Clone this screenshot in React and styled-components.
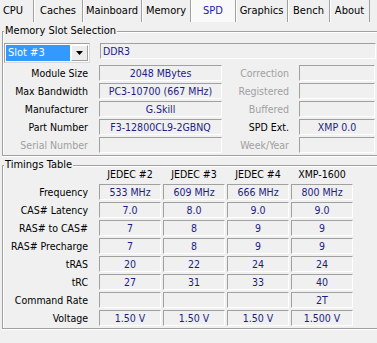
import React from "react";
import styled, { createGlobalStyle } from "styled-components";

const GlobalStyle = createGlobalStyle`
  html, body {
    margin: 0;
    padding: 0;
    background: #f0f0f0;
    overflow: hidden;
  }
  body {
    font-family: "DejaVu Sans Condensed", "DejaVu Sans", "Liberation Sans", sans-serif;
    font-stretch: condensed;
    font-size: 10.5px;
    color: #000;
  }
`;

const tabs = [
  { name: "CPU", width: 41 },
  { name: "Caches", width: 49 },
  { name: "Mainboard", width: 59 },
  { name: "Memory", width: 49 },
  { name: "SPD", width: 45, active: true },
  { name: "Graphics", width: 52 },
  { name: "Bench", width: 42 },
  { name: "About", width: 40 },
];

const info = [
  ["Module Size", "2048 MBytes", "Correction", "", false],
  ["Max Bandwidth", "PC3-10700 (667 MHz)", "Registered", "", false],
  ["Manufacturer", "G.Skill", "Buffered", "", false],
  ["Part Number", "F3-12800CL9-2GBNQ", "SPD Ext.", "XMP 0.0", true],
  ["Serial Number", "", "Week/Year", "", false],
];

const columns = ["JEDEC #2", "JEDEC #3", "JEDEC #4", "XMP-1600"];

const timings = [
  ["Frequency", ["533 MHz", "609 MHz", "666 MHz", "800 MHz"]],
  ["CAS# Latency", ["7.0", "8.0", "9.0", "9.0"]],
  ["RAS# to CAS#", ["7", "8", "9", "9"]],
  ["RAS# Precharge", ["7", "8", "9", "9"]],
  ["tRAS", ["20", "22", "24", "24"]],
  ["tRC", ["27", "31", "33", "40"]],
  ["Command Rate", ["", "", "", "2T"]],
  ["Voltage", ["1.50 V", "1.50 V", "1.50 V", "1.500 V"]],
];

const App = () => {
  return (
    <Window>
      <GlobalStyle />
      <TabStrip>
        {tabs.map((t) => (
          <Tab key={t.name} $width={t.width} $active={t.active}>
            {t.name}
          </Tab>
        ))}
      </TabStrip>

      <Group>
        <Legend>Memory Slot Selection</Legend>
        <SlotRow>
          <Combo>
            <ComboValue>Slot #3</ComboValue>
            <ComboButton>
              <svg width="7" height="4" viewBox="0 0 7 4">
                <path d="M0 0h7L3.5 4z" fill="#000" />
              </svg>
            </ComboButton>
          </Combo>
          <Field $align="left" $width={276}>DDR3</Field>
        </SlotRow>
        <InfoGrid>
          {info.map(([label, value, label2, value2, enabled2], i) => (
            <React.Fragment key={label}>
              <Label $disabled={i === 4}>{label}</Label>
              <Field>{value}</Field>
              <Label $disabled={!enabled2} $pad={10}>{label2}</Label>
              <Field>{value2}</Field>
            </React.Fragment>
          ))}
        </InfoGrid>
      </Group>

      <Group>
        <Legend>Timings Table</Legend>
        <TimingGrid>
          <span />
          {columns.map((c) => (
            <ColumnHead key={c}>{c}</ColumnHead>
          ))}
          {timings.map(([label, values]) => (
            <React.Fragment key={label}>
              <Label $pad={9}>{label}</Label>
              {values.map((v, i) => (
                <Field key={i}>{v}</Field>
              ))}
            </React.Fragment>
          ))}
        </TimingGrid>
      </Group>
    </Window>
  );
};

export default App;

const Window = styled.div`
  width: 392px;
  height: 343px;
  overflow: hidden;
`;

const TabStrip = styled.div`
  display: flex;
  height: 22px;
  margin-left: -7px;
`;

const Tab = styled.div`
  width: ${(p) => p.$width}px;
  height: 22px;
  box-sizing: border-box;
  display: flex;
  align-items: center;
  justify-content: center;
  padding-bottom: 1px;
  font-size: 11px;
  color: ${(p) => (p.$active ? "#1a1ab4" : "#000")};
  background: ${(p) => (p.$active ? "#f9f9f9" : "transparent")};
  border-right: 1px solid #a0a0a0;
  box-shadow: inset 1px 0 0 #fff;
  white-space: nowrap;
`;

const Group = styled.section`
  position: relative;
  margin: 9px 0 0 2px;
  width: 384px;
  box-sizing: border-box;
  border: 1px solid #a0a0a0;
  box-shadow: inset 1px 1px 0 #fff, 0 1px 0 #fff;
  padding: 1px 0 2px 0;
`;

const Legend = styled.span`
  position: absolute;
  top: -8px;
  left: 1px;
  padding: 0 1px;
  line-height: 14px;
  font-size: 11px;
  background: #f0f0f0;
  white-space: nowrap;
`;

const SlotRow = styled.div`
  display: flex;
  gap: 10px;
  margin: 10px 0 0 1px;
`;

const Combo = styled.div`
  width: 86px;
  height: 20px;
  box-sizing: border-box;
  display: flex;
  padding: 1px;
  background: #fff;
  border: 1px solid #a0a0a0;
  border-right-color: #d8d8d8;
  border-bottom-color: #d8d8d8;
`;

const ComboValue = styled.div`
  flex: 1;
  background: #3399ff;
  color: #fff;
  font-size: 11px;
  line-height: 16px;
  padding-left: 2px;
`;

const ComboButton = styled.div`
  width: 17px;
  margin-left: 1px;
  box-sizing: border-box;
  display: flex;
  align-items: center;
  justify-content: center;
  background: #ececec;
  border: 1px solid #fff;
  border-right-color: #a0a0a0;
  border-bottom-color: #a0a0a0;
`;

const InfoGrid = styled.div`
  display: grid;
  grid-template-columns: 96px 123px 77px 76px;
  grid-auto-rows: 16px;
  row-gap: 2px;
  margin-top: 2px;
`;

const Label = styled.div`
  text-align: right;
  padding-right: ${(p) => p.$pad ?? 11}px;
  line-height: 16px;
  white-space: nowrap;
  color: ${(p) => (p.$disabled ? "#a0a0a0" : "#000")};
`;

const Field = styled.div`
  ${(p) => (p.$width ? `width: ${p.$width}px;` : "")}
  height: 16px;
  box-sizing: border-box;
  border-top: 1px solid #a0a0a0;
  border-left: 1px solid #a0a0a0;
  border-bottom: 1px solid #fff;
  border-right: 1px solid #fff;
  color: #1c1c84;
  line-height: 14px;
  text-align: ${(p) => p.$align ?? "center"};
  padding: 0 2px;
  white-space: nowrap;
  overflow: hidden;
`;

const TimingGrid = styled.div`
  display: grid;
  grid-template-columns: 94px repeat(4, 62px);
  grid-template-rows: 15px repeat(8, 16px);
  column-gap: 2px;
  row-gap: 2px;
`;

const ColumnHead = styled.div`
  text-align: center;
  line-height: 15px;
  white-space: nowrap;
`;
